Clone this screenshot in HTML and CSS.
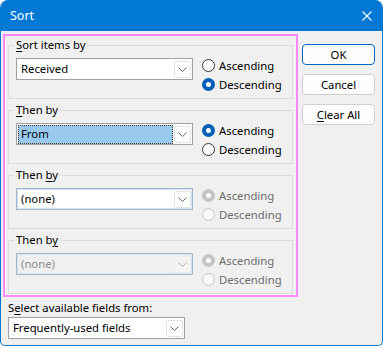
FILE: index.html
```html
<!DOCTYPE html>
<html lang="en">
    <head>
        <meta charset="UTF-8" />
        <title>Sort</title>
        <link rel="stylesheet" href="styles.css">
    </head>
    <body>
        <div class="window">
            <div class="titlebar">
                <span class="title">Sort</span>
                <svg class="close" width="10" height="10" viewBox="0 0 10 10">
                    <path d="M0.5 0.5 L9.5 9.5 M9.5 0.5 L0.5 9.5" stroke="#fff" stroke-width="1.1" fill="none" />
                </svg>
            </div>
            <div class="content">
                <div class="main">
                    <div class="highlight">
                        <fieldset class="group">
                            <legend><u>S</u>ort items by</legend>
                            <div class="row">
                                <div class="combo">
                                    <span class="value">Received</span>
                                    <span class="arrow"><svg width="9" height="5" viewBox="0 0 9 5"><path d="M0.5 0.5 L4.5 4.5 L8.5 0.5" stroke="#666" fill="none" /></svg></span>
                                </div>
                                <div class="radios">
                                    <label class="option"><span class="radio"></span>Ascending</label>
                                    <label class="option"><span class="radio checked"></span>Descending</label>
                                </div>
                            </div>
                        </fieldset>
                        <fieldset class="group">
                            <legend><u>T</u>hen by</legend>
                            <div class="row">
                                <div class="combo focused">
                                    <span class="value">From</span>
                                    <span class="arrow"><svg width="9" height="5" viewBox="0 0 9 5"><path d="M0.5 0.5 L4.5 4.5 L8.5 0.5" stroke="#666" fill="none" /></svg></span>
                                </div>
                                <div class="radios">
                                    <label class="option"><span class="radio checked"></span>Ascending</label>
                                    <label class="option"><span class="radio"></span>Descending</label>
                                </div>
                            </div>
                        </fieldset>
                        <fieldset class="group">
                            <legend>Then <u>b</u>y</legend>
                            <div class="row">
                                <div class="combo soft">
                                    <span class="value">(none)</span>
                                    <span class="arrow"><svg width="9" height="5" viewBox="0 0 9 5"><path d="M0.5 0.5 L4.5 4.5 L8.5 0.5" stroke="#666" fill="none" /></svg></span>
                                </div>
                                <div class="radios disabled">
                                    <label class="option"><span class="radio checked"></span>Ascending</label>
                                    <label class="option"><span class="radio"></span>Descending</label>
                                </div>
                            </div>
                        </fieldset>
                        <fieldset class="group">
                            <legend>Then b<u>y</u></legend>
                            <div class="row">
                                <div class="combo soft off">
                                    <span class="value">(none)</span>
                                    <span class="arrow"><svg width="9" height="5" viewBox="0 0 9 5"><path d="M0.5 0.5 L4.5 4.5 L8.5 0.5" stroke="#aaa" fill="none" /></svg></span>
                                </div>
                                <div class="radios disabled">
                                    <label class="option"><span class="radio checked"></span>Ascending</label>
                                    <label class="option"><span class="radio"></span>Descending</label>
                                </div>
                            </div>
                        </fieldset>
                    </div>
                    <div class="buttons">
                        <button class="btn default">OK</button>
                        <button class="btn">Cancel</button>
                        <button class="btn"><u>C</u>lear All</button>
                    </div>
                </div>
                <div class="fields-label">S<u>e</u>lect available fields from:</div>
                <div class="combo bottom">
                    <span class="value">Frequently-used fields</span>
                    <span class="arrow"><svg width="9" height="5" viewBox="0 0 9 5"><path d="M0.5 0.5 L4.5 4.5 L8.5 0.5" stroke="#666" fill="none" /></svg></span>
                </div>
            </div>
        </div>
    </body>
</html>
```
FILE: styles.css
```css
* {
    box-sizing: border-box;
}

body {
    margin: 0;
    background-color: #ffffff;
    font-family: "Noto Sans", "Open Sans", sans-serif;
    font-size: 11.3px;
    color: #000;
}

u {
    text-decoration-thickness: 1px;
    text-underline-offset: 2px;
}

.window {
    width: 383px;
    height: 346px;
    border: 1px solid #0078d4;
    border-top: none;
    border-radius: 8px 8px 5px 5px;
    background-color: #f0f0f0;
    overflow: hidden;
}

.titlebar {
    height: 31px;
    background-color: #0078d4;
    display: flex;
    align-items: center;
    justify-content: space-between;
    padding: 0 10px 0 9px;
    color: #fff;
}

.title {
    font-size: 12.5px;
}

.content {
    padding: 3px 7px 0 2px;
}

.main {
    display: flex;
    align-items: flex-start;
    gap: 4px;
}

.highlight {
    width: 295px;
    height: 263px;
    border: 2px solid #ff88ff;
    padding: 1px 3px 0 3px;
    display: flex;
    flex-direction: column;
    gap: 3px;
}

.group {
    margin: 0;
    border: 1px solid #dcdcdc;
    padding: 5px 7px 4px 7px;
    min-width: 0;
}

.group legend {
    padding: 0 2px;
    margin-left: -2px;
    line-height: 16px;
}

.row {
    display: flex;
    align-items: flex-start;
    gap: 9px;
}

.combo {
    width: 177px;
    height: 22px;
    border: 1px solid #a0a0a0;
    background-color: #fff;
    display: flex;
    align-items: center;
    justify-content: space-between;
    padding: 0 1px 0 3px;
}

.combo .value {
    line-height: 18px;
    padding-left: 1px;
}

.combo .arrow {
    width: 17px;
    height: 17px;
    border: 1px solid #e3e3e3;
    border-radius: 2px;
    background-color: #fff;
    display: flex;
    align-items: center;
    justify-content: center;
}

.combo.focused {
    padding-left: 1px;
}

.combo.focused .value {
    flex: 1;
    margin-right: 1px;
    height: 19px;
    background-color: #99c9ef;
    outline: 1px dotted #4a3a20;
    outline-offset: -1px;
    padding-left: 3px;
}

.combo.soft {
    border-color: #a4b4c8;
    box-shadow: inset 0 0 0 1px #d4e4f4;
}

.combo.off {
    background-color: #f0f0f0;
    color: #8a8a8a;
}

.combo.off .arrow {
    background-color: #f4f4f4;
    border-color: #ececec;
}

.radios {
    margin-top: -2px;
    display: flex;
    flex-direction: column;
}

.option {
    height: 19px;
    display: flex;
    align-items: center;
    gap: 4px;
}

.radio {
    width: 13px;
    height: 13px;
    border-radius: 50%;
    border: 1px solid #333;
    background-color: #fff;
}

.radio.checked {
    border: 4px solid #005fb8;
}

.radios.disabled .option {
    color: #6d6d6d;
}

.radios.disabled .radio {
    border-color: #c4c4c4;
    background-color: #f8f8f8;
}

.radios.disabled .radio.checked {
    border: 4px solid #c4c4c4;
    background-color: #fff;
}

.buttons {
    margin-top: 10px;
    display: flex;
    flex-direction: column;
    gap: 9px;
}

.btn {
    width: 73px;
    height: 21px;
    border: 1px solid #d0d0d0;
    border-radius: 4px;
    background-color: #fdfdfd;
    font: inherit;
    color: #000;
    padding: 0;
}

.btn.default {
    border-color: #0067c0;
}

.fields-label {
    margin: 3px 0 1px 5px;
    line-height: 16px;
}

.combo.bottom {
    margin-left: 5px;
    width: 177px;
}
```
